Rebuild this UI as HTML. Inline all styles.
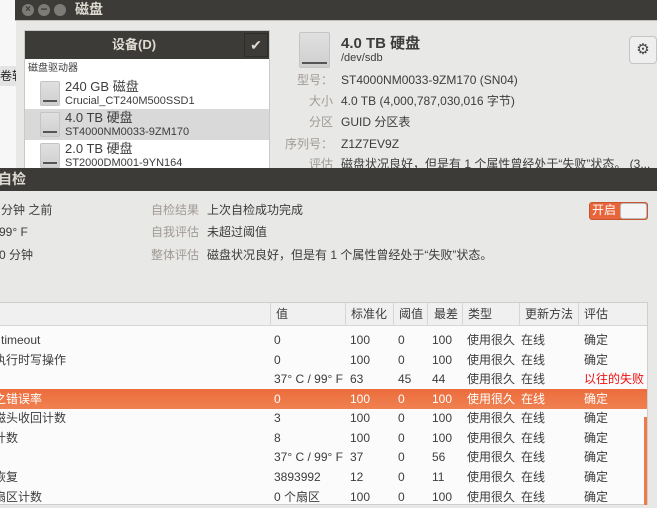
<!DOCTYPE html>
<html><head><meta charset="utf-8"><style>
*{margin:0;padding:0;box-sizing:border-box}
body{width:657px;height:505px;overflow:hidden;position:relative;background:#e8e8e7;font-family:"Liberation Sans","Noto Sans CJK SC",sans-serif;font-size:12px;color:#3c3c3c}
.a{position:absolute;white-space:nowrap;line-height:1.2}
.lbl{color:#a09a94}
.disk{position:absolute;background:linear-gradient(#e0e0e0,#cfcfcf);border-radius:2px;border:1px solid #c4c4c4}
.disk:after{content:"";position:absolute;left:2px;right:2px;bottom:3px;height:2px;background:#555}
.row{position:absolute;left:0;width:648px;height:19.5px;line-height:19.5px}
.row span{position:absolute;white-space:nowrap}
</style></head><body>
<div class="a" style="left:0;top:0;width:16px;height:170px;background:#f7f7f7"></div>
<div class="a" style="left:0;top:66px;width:16px;height:20px;background:#e4e4e4;font-size:12px;line-height:20px;color:#222;overflow:hidden">卷轴</div>
<div class="a" style="left:15px;top:0;width:642px;height:20px;background:#3c3b37"></div>
<div class="a" style="left:22px;top:4px;width:12px;height:12px;border-radius:50%;background:#7d7b76;color:#3c3b37;font-size:10px;line-height:12px;text-align:center;font-weight:bold">×</div>
<div class="a" style="left:38px;top:4px;width:12px;height:12px;border-radius:50%;background:#7d7b76;color:#3c3b37;font-size:12px;line-height:11px;text-align:center;font-weight:bold">−</div>
<div class="a" style="left:54px;top:4px;width:12px;height:12px;border-radius:50%;background:#7d7b76"></div>
<div class="a" style="left:75px;top:1px;color:#dfdbd2;font-size:14px;font-weight:bold">磁盘</div>
<div class="a" style="left:15px;top:20px;width:642px;height:1px;background:#bdbdbd"></div>
<div class="a" style="left:24px;top:30px;width:246px;height:140px;background:#fff;border:1px solid #c9c9c9"></div>
<div class="a" style="left:25px;top:31px;width:244px;height:28px;background:#3c3b37"></div>
<div class="a" style="left:112px;top:37px;color:#dfdbd2;font-size:13px;font-weight:bold">设备(D)</div>
<div class="a" style="left:244px;top:33px;width:24px;height:24px;border:1px solid #2e2d2a;color:#dfdbd2;text-align:center;line-height:22px;font-size:14px">✔</div>
<div class="a" style="left:28px;top:63px;font-size:10px">磁盘驱动器</div>
<div class="disk" style="left:40px;top:81px;width:20px;height:25px"></div>
<div class="a" style="left:65px;top:79px;font-size:13px">240 GB 磁盘</div>
<div class="a" style="left:65px;top:95px;font-size:11px">Crucial_CT240M500SSD1</div>
<div class="a" style="left:25px;top:109px;width:244px;height:31px;background:#d9d9d9"></div>
<div class="disk" style="left:40px;top:112px;width:20px;height:25px"></div>
<div class="a" style="left:65px;top:110px;font-size:13px">4.0 TB 硬盘</div>
<div class="a" style="left:65px;top:126px;font-size:11px">ST4000NM0033-9ZM170</div>
<div class="disk" style="left:40px;top:143px;width:20px;height:25px"></div>
<div class="a" style="left:65px;top:141px;font-size:13px">2.0 TB 硬盘</div>
<div class="a" style="left:65px;top:157px;font-size:11px">ST2000DM001-9YN164</div>
<div class="disk" style="left:299px;top:32px;width:31px;height:36px"></div>
<div class="a" style="left:341px;top:35px;font-size:15px;font-weight:bold">4.0 TB 硬盘</div>
<div class="a" style="left:341px;top:52px;font-size:11px">/dev/sdb</div>
<div class="a" style="left:629px;top:36px;width:28px;height:28px;border:1px solid #c4c4c4;border-radius:4px;background:#efefef;text-align:center;line-height:26px;font-size:15px;color:#444">⚙</div>
<div class="a lbl" style="left:297px;top:73px">型号：</div><div class="a" style="left:341px;top:73px">ST4000NM0033-9ZM170 (SN04)</div>
<div class="a lbl" style="left:309px;top:94px">大小</div><div class="a" style="left:341px;top:94px">4.0 TB (4,000,787,030,016 字节)</div>
<div class="a lbl" style="left:309px;top:115px">分区</div><div class="a" style="left:341px;top:115px">GUID 分区表</div>
<div class="a lbl" style="left:285px;top:137px">序列号：</div><div class="a" style="left:341px;top:137px">Z1Z7EV9Z</div>
<div class="a lbl" style="left:309px;top:157px;height:11px;overflow:hidden">评估</div><div class="a" style="left:341px;top:157px;height:11px;overflow:hidden">磁盘状况良好，但是有 1 个属性曾经处于“失败”状态。 (3...</div>
<div class="a" style="left:0;top:168px;width:657px;height:23px;background:#3c3b37"></div>
<div class="a" style="left:-2px;top:171px;color:#dfdbd2;font-size:14px;font-weight:bold">自检</div>
<div class="a" style="left:0;top:191px;width:657px;height:314px;background:#e8e8e7"></div>
<div class="a" style="left:1px;top:203px">分钟 之前</div>
<div class="a" style="left:-1px;top:225px">99° F</div>
<div class="a" style="left:-1px;top:248px">0 分钟</div>
<div class="a lbl" style="left:151px;top:203px">自检结果</div><div class="a" style="left:207px;top:203px">上次自检成功完成</div>
<div class="a lbl" style="left:151px;top:225px">自我评估</div><div class="a" style="left:207px;top:225px">未超过阈值</div>
<div class="a lbl" style="left:151px;top:248px">整体评估</div><div class="a" style="left:207px;top:248px">磁盘状况良好，但是有 1 个属性曾经处于“失败”状态。</div>
<div class="a" style="left:589px;top:202px;width:59px;height:18px;border-radius:3px;background:#e8643a;border:1px solid #c65530"></div>
<div class="a" style="left:592px;top:203px;color:#fff;font-size:12px">开启</div>
<div class="a" style="left:620px;top:203px;width:27px;height:16px;border-radius:3px;background:#f4f4f4;border:1px solid #bbb"></div>
<div class="a" style="left:0;top:302px;width:648px;height:203px;background:#fbfbfb;border:1px solid #cfcfcf;border-left:none"></div>
<div class="a" style="left:0;top:303px;width:647px;height:23px;background:#f0f0f0;border-bottom:1px solid #d6d6d6"></div>
<div class="a" style="left:270px;top:303px;width:1px;height:23px;background:#d6d6d6"></div>
<div class="a" style="left:345px;top:303px;width:1px;height:23px;background:#d6d6d6"></div>
<div class="a" style="left:393px;top:303px;width:1px;height:23px;background:#d6d6d6"></div>
<div class="a" style="left:427px;top:303px;width:1px;height:23px;background:#d6d6d6"></div>
<div class="a" style="left:462px;top:303px;width:1px;height:23px;background:#d6d6d6"></div>
<div class="a" style="left:519px;top:303px;width:1px;height:23px;background:#d6d6d6"></div>
<div class="a" style="left:578px;top:303px;width:1px;height:23px;background:#d6d6d6"></div>
<div class="a" style="left:276px;top:307px">值</div>
<div class="a" style="left:351px;top:307px">标准化</div>
<div class="a" style="left:399px;top:307px">阈值</div>
<div class="a" style="left:434px;top:307px">最差</div>
<div class="a" style="left:468px;top:307px">类型</div>
<div class="a" style="left:525px;top:307px">更新方法</div>
<div class="a" style="left:584px;top:307px">评估</div>
<div class="a" style="left:0;top:389px;width:647px;height:20px;background:linear-gradient(#ec6c3c,#f08050)"></div>
<div class="a" style="left:644px;top:417px;width:3px;height:88px;background:#ef7a4a"></div>

<div class="row" style="top:331px"><span style="left:1px">timeout</span><span style="left:274px">0</span><span style="left:350px">100</span><span style="left:398px">0</span><span style="left:432px">100</span><span style="left:467px">使用很久</span><span style="left:521px">在线</span><span style="left:584px">确定</span></div>
<div class="row" style="top:351px"><span style="left:-6px">执行时写操作</span><span style="left:274px">0</span><span style="left:350px">100</span><span style="left:398px">0</span><span style="left:432px">100</span><span style="left:467px">使用很久</span><span style="left:521px">在线</span><span style="left:584px">确定</span></div>
<div class="row" style="top:370px"><span style="left:274px">37° C / 99° F</span><span style="left:350px">63</span><span style="left:398px">45</span><span style="left:432px">44</span><span style="left:467px">使用很久</span><span style="left:521px">在线</span><span style="left:584px;color:#f01010">以往的失败</span></div>
<div class="row" style="top:390px;color:#fff"><span style="left:-6px">之错误率</span><span style="left:274px">0</span><span style="left:350px">100</span><span style="left:398px">0</span><span style="left:432px">100</span><span style="left:467px">使用很久</span><span style="left:521px">在线</span><span style="left:584px">确定</span></div>
<div class="row" style="top:409px"><span style="left:-6px">磁头收回计数</span><span style="left:274px">3</span><span style="left:350px">100</span><span style="left:398px">0</span><span style="left:432px">100</span><span style="left:467px">使用很久</span><span style="left:521px">在线</span><span style="left:584px">确定</span></div>
<div class="row" style="top:429px"><span style="left:-6px">计数</span><span style="left:274px">8</span><span style="left:350px">100</span><span style="left:398px">0</span><span style="left:432px">100</span><span style="left:467px">使用很久</span><span style="left:521px">在线</span><span style="left:584px">确定</span></div>
<div class="row" style="top:448px"><span style="left:274px">37° C / 99° F</span><span style="left:350px">37</span><span style="left:398px">0</span><span style="left:432px">56</span><span style="left:467px">使用很久</span><span style="left:521px">在线</span><span style="left:584px">确定</span></div>
<div class="row" style="top:468px"><span style="left:-6px">恢复</span><span style="left:274px">3893992</span><span style="left:350px">12</span><span style="left:398px">0</span><span style="left:432px">11</span><span style="left:467px">使用很久</span><span style="left:521px">在线</span><span style="left:584px">确定</span></div>
<div class="row" style="top:488px"><span style="left:-6px">扇区计数</span><span style="left:274px">0 个扇区</span><span style="left:350px">100</span><span style="left:398px">0</span><span style="left:432px">100</span><span style="left:467px">使用很久</span><span style="left:521px">在线</span><span style="left:584px">确定</span></div>
</body></html>
